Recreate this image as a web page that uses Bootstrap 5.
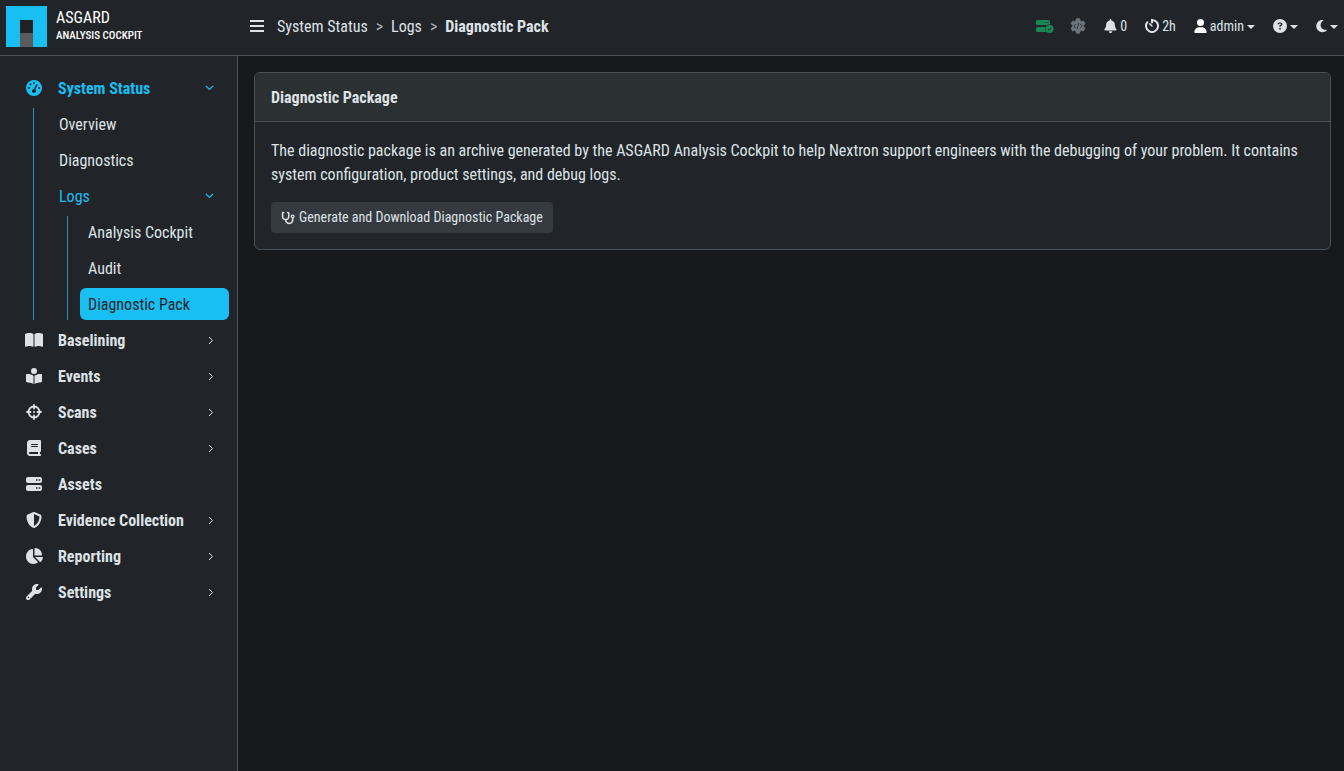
<!DOCTYPE html>
<html lang="en" data-bs-theme="dark">
<head>
<meta charset="utf-8">
<meta name="viewport" content="width=device-width, initial-scale=1">
<title>Diagnostic Pack - ASGARD Analysis Cockpit</title>
<link href="https://cdn.jsdelivr.net/npm/bootstrap@5.3.0/dist/css/bootstrap.min.css" rel="stylesheet">
<style>
  :root { --accent: #18bff2; --surface: #212529; --line: #495057; --ink: #dee2e6; }
  body { font-family: "Roboto Condensed", Roboto, sans-serif; background: #18191d; color: var(--ink); }
  a { color: inherit; text-decoration: none; }
  svg { fill: currentColor; flex: none; display: block; }

  .topbar { background: var(--surface); border-bottom: 1px solid var(--line); min-height: 56px; padding: 0 6px 2px 6px; }
  .brand { width: 240px; color: #fff; }
  .brand-text { padding-left: 9px; }
  .brand-name { font-size: 16px; line-height: 18px; }
  .brand-sub { font-size: 11px; line-height: 18px; font-weight: 500; }
  .crumbs { --bs-breadcrumb-divider: ">"; --bs-breadcrumb-divider-color: #adb5bd; --bs-breadcrumb-item-active-color: var(--ink); margin-left: 9px; }
  .crumbs .breadcrumb-item::before { font-weight: 400; }
  .tool { background: none; border: 0; padding: 0; color: var(--ink); display: flex; align-items: center; gap: 3px; font-size: 14px; }
  .tool svg, .side-link svg { margin-bottom: 2px; }
  .tool.dropdown-toggle::after { margin-left: 0; }
  .tools { gap: 18px; }
  .tools-state { gap: 16px; }
  .tool-ok { color: #198754; }
  .tool-idle { color: #6c757d; }

  .side { width: 238px; background: var(--surface); border-right: 1px solid var(--line); padding: 16px 8px; }
  .side-link { display: flex; align-items: center; height: 32px; margin-bottom: 4px; border-radius: 6px; padding: 2px 15px 0 8px; }
  .side-top { font-weight: 700; padding-left: 16px; }
  .side-top .ico { width: 20px; margin-right: 14px; display: flex; justify-content: center; }
  .chev { margin-left: auto; fill: none; stroke: currentColor; }
  .side-group { margin: 0 0 4px 25px; padding-left: 17px; border-left: 1px solid #2098bb; }
  .side-group .side-group { margin: 0 0 0 16px; padding-left: 12px; }
  .side-group > .side-link:last-child { margin-bottom: 0; }
  .is-open { color: var(--accent); }
  .is-current { background: var(--accent); color: #212529; }

  .content { padding: 16px 13px 16px 16px; }
  .pack-card { --bs-card-bg: #212529; --bs-card-cap-bg: #2b3033; --bs-card-border-color: #495057; }
  .pack-card .card-header { line-height: 24px; padding-top: 13px; padding-bottom: 11px; }
  .pack-card .card-body { padding-top: 17px; }
  .pack-card p { margin-bottom: 15px; }
  .btn-pack { --bs-btn-bg: #343a40; --bs-btn-color: var(--ink); --bs-btn-hover-bg: #424649; --bs-btn-hover-color: #fff; --bs-btn-padding-x: 9px; }
</style>
</head>
<body class="min-vh-100 d-flex flex-column">
<header class="topbar d-flex align-items-center">
  <a href="#" class="brand d-flex align-items-center">
    <svg width="41" height="41" viewBox="0 0 41 41"><path fill="#18bff2" d="M0 0h41v41H0z"/><path fill="#212121" d="M14 14h13v13H14z"/><path fill="#5b5b5b" d="M14 27h13v14H14z"/></svg>
    <span class="brand-text d-flex flex-column"><span class="brand-name">ASGARD</span><span class="brand-sub">ANALYSIS COCKPIT</span></span>
  </a>
  <button class="tool p-1" type="button" aria-label="Toggle menu">
    <svg width="14" height="12" viewBox="0 0 14 12"><path d="M0 0h14v2H0zM0 5h14v2H0zM0 10h14v2H0z"/></svg>
  </button>
  <nav aria-label="breadcrumb">
    <ol class="breadcrumb crumbs mb-0">
      <li class="breadcrumb-item"><a href="#">System Status</a></li>
      <li class="breadcrumb-item"><a href="#">Logs</a></li>
      <li class="breadcrumb-item active fw-bold" aria-current="page">Diagnostic Pack</li>
    </ol>
  </nav>
  <div class="tools ms-auto d-flex align-items-center">
    <div class="tools-state d-flex align-items-center">
      <button class="tool tool-ok" type="button" aria-label="Server state">
        <svg width="18" height="14" viewBox="0 0 18 14">
          <rect y="1" width="14" height="5" rx="1.500"/><rect y="8" width="14" height="5" rx="1.500"/>
          <circle cx="13.500" cy="10" r="4.500" fill="#212529"/><circle cx="13.500" cy="10" r="4"/>
          <path d="M11.800 10l1.200 1.300 2.200-2.500" fill="none" stroke="#212529"/>
          <circle cx="9.500" cy="3.500" r=".6" fill="#212529"/><circle cx="11.800" cy="3.500" r=".6" fill="#212529"/>
        </svg>
      </button>
      <button class="tool tool-idle" type="button" aria-label="Services">
        <svg width="16" height="16" viewBox="0 0 16 16">
          <path stroke="currentColor" stroke-linejoin="round" d="M6.500.8h3l.5 2.100 1.400.8 2-.6 1.500 2.600-1.500 1.500v1.600l1.500 1.500-1.500 2.600-2-.6-1.400.8-.5 2.100h-3L6 13.100l-1.400-.8-2 .6-1.500-2.600 1.500-1.500V7.200L1.100 5.700l1.500-2.600 2 .6L6 2.900z"/>
          <path d="M5.600 5.900L3.900 8l1.700 2.100M10.400 5.900L12.100 8l-1.700 2.100M8.800 5L7.200 11" fill="none" stroke="#212529" stroke-width=".8"/>
        </svg>
      </button>
    </div>
    <button class="tool" type="button" aria-label="Notifications: 0">
      <svg width="13" height="14" viewBox="0 0 448 512"><path d="M224 0c-17.700 0-32 14.300-32 32V51.200C119 66 64 130.600 64 208v18.800c0 47-17.300 92.400-48.500 127.600l-7.400 8.300c-8.400 9.400-10.400 22.900-5.300 34.400S19.400 416 32 416H416c12.600 0 24-7.400 29.200-18.900s3.100-25-5.300-34.400l-7.400-8.300C401.300 319.200 384 273.900 384 226.800V208c0-77.400-55-142-128-156.800V32c0-17.700-14.300-32-32-32zm45.300 493.300c12-12 18.700-28.300 18.700-45.300H160c0 17 6.700 33.300 18.700 45.300s28.300 18.700 45.300 18.700 33.300-6.700 45.300-18.700z"/></svg>
      <span>0</span>
    </button>
    <button class="tool" type="button">
      <svg width="14" height="14" viewBox="0 0 14 14"><path d="M7 3.500V1a6 6 0 1 1-4.600 2.200" fill="none" stroke="currentColor" stroke-width="2" stroke-linecap="round"/><path d="M4.700 4.700L7 7" stroke="currentColor" stroke-width="1.500" stroke-linecap="round"/></svg>
      <span>2h</span>
    </button>
    <button class="tool dropdown-toggle" type="button" data-bs-toggle="dropdown" aria-expanded="false">
      <svg width="13" height="14" viewBox="0 0 448 512"><path fill="#fff" d="M224 256A128 128 0 1 0 224 0a128 128 0 1 0 0 256zm-45.700 48C79.800 304 0 383.800 0 482.300C0 498.700 13.300 512 29.700 512H418.300c16.400 0 29.700-13.300 29.700-29.700C448 383.800 368.200 304 269.700 304H178.300z"/></svg>
      <span>admin</span>
    </button>
    <button class="tool dropdown-toggle" type="button" data-bs-toggle="dropdown" aria-expanded="false" aria-label="Help">
      <svg width="14" height="14" viewBox="0 0 512 512"><path d="M256 512A256 256 0 1 0 256 0a256 256 0 1 0 0 512zM169.800 165.300c7.900-22.300 29.100-37.300 52.800-37.300h58.300c34.900 0 63.100 28.300 63.100 63.100c0 22.600-12.100 43.500-31.700 54.800L280 264.400c-.2 13-10.900 23.600-24 23.600c-13.300 0-24-10.700-24-24V250.500c0-8.600 4.600-16.500 12.100-20.800l44.300-25.400c4.700-2.700 7.600-7.700 7.600-13.100c0-8.400-6.800-15.100-15.100-15.100H222.600c-3.400 0-6.400 2.100-7.500 5.300l-.4 1.200c-4.400 12.500-18.200 19-30.600 14.600s-19-18.200-14.600-30.600l.4-1.200zM224 352a32 32 0 1 1 64 0 32 32 0 1 1 -64 0z"/></svg>
    </button>
    <button class="tool dropdown-toggle" type="button" data-bs-toggle="dropdown" aria-expanded="false" aria-label="Theme">
      <svg width="11" height="14" viewBox="0 0 384 512"><path d="M223.500 32C100 32 0 132.300 0 256S100 480 223.500 480c60.600 0 115.500-24.200 155.800-63.400c5-4.900 6.300-12.500 3.100-18.700s-10.100-9.700-17-8.500c-9.800 1.700-19.800 2.600-30.100 2.600c-96.900 0-175.500-78.800-175.500-176c0-65.800 36-123.100 89.300-153.300c6.100-3.500 9.200-10.500 7.700-17.300s-7.300-11.900-14.300-12.500c-6.300-.5-12.600-.8-19-.8z"/></svg>
    </button>
  </div>
</header>

<div class="d-flex flex-grow-1">
  <nav class="side flex-shrink-0" aria-label="Main">
    <a href="#" class="side-link side-top is-open"><span class="ico"><svg width="16" height="16" viewBox="0 0 512 512"><path d="M0 256a256 256 0 1 1 512 0A256 256 0 1 1 0 256zM288 96a32 32 0 1 0 -64 0 32 32 0 1 0 64 0zM256 416c35.300 0 64-28.700 64-64c0-17.400-6.900-33.100-18.100-44.600L366 161.700c5.300-12.100-.2-26.300-12.300-31.600s-26.300 .2-31.600 12.300L257.900 288c-.6 0-1.300 0-1.900 0c-35.300 0-64 28.700-64 64s28.700 64 64 64zM176 144a32 32 0 1 0 -64 0 32 32 0 1 0 64 0zM96 288a32 32 0 1 0 0-64 32 32 0 1 0 0 64zm352-32a32 32 0 1 0 -64 0 32 32 0 1 0 64 0z"/></svg></span>System Status
      <svg class="chev" width="9" height="6" viewBox="0 0 9 6"><path d="M1 1l3.500 3.500L8 1" stroke-width="1.200"/></svg></a>
    <div class="side-group">
      <a href="#" class="side-link">Overview</a>
      <a href="#" class="side-link">Diagnostics</a>
      <a href="#" class="side-link is-open">Logs<svg class="chev" width="9" height="6" viewBox="0 0 9 6"><path d="M1 1l3.500 3.500L8 1" stroke-width="1.200"/></svg></a>
      <div class="side-group">
        <a href="#" class="side-link">Analysis Cockpit</a>
        <a href="#" class="side-link">Audit</a>
        <a href="#" class="side-link is-current" aria-current="page">Diagnostic Pack</a>
      </div>
    </div>
    <a href="#" class="side-link side-top"><span class="ico"><svg width="18" height="16" viewBox="0 0 576 512"><path d="M249.600 471.500c10.800 3.800 22.400-4.100 22.400-15.500V78.600c0-4.200-1.600-8.400-5-11C247.400 52 202.400 32 144 32C93.500 32 46.300 45.300 18.100 56.100C6.800 60.500 0 71.700 0 83.800V454.100c0 11.900 12.800 20.200 24.100 16.500C55.600 460.100 105.500 448 144 448c33.900 0 79 14 105.600 23.500zm76.800 0C353 462 398.100 448 432 448c38.500 0 88.400 12.100 119.900 22.600c11.300 3.800 24.100-4.600 24.100-16.500V83.800c0-12.100-6.800-23.300-18.100-27.600C529.700 45.300 482.500 32 432 32c-58.400 0-103.400 20-123 35.600c-3.300 2.600-5 6.800-5 11V456c0 11.400 11.700 19.300 22.400 15.500z"/></svg></span>Baselining
      <svg class="chev" width="6" height="9" viewBox="0 0 6 9"><path d="M1 1l3.500 3.500L1 8"/></svg></a>
    <a href="#" class="side-link side-top"><span class="ico"><svg width="16" height="16" viewBox="0 0 512 512"><path d="M160 96a96 96 0 1 1 192 0A96 96 0 1 1 160 96zm80 152V512l-48.400-24.200c-20.900-10.400-43.500-17-66.800-19.300l-96-9.600C12.500 457.200 0 443.500 0 427V224c0-17.700 14.300-32 32-32H62.300c63.600 0 125.600 19.600 177.700 56zm32 264V248c52.100-36.400 114.100-56 177.700-56H480c17.700 0 32 14.300 32 32V427c0 16.400-12.500 30.200-28.800 31.800l-96 9.600c-23.200 2.300-45.900 8.900-66.800 19.300L272 512z"/></svg></span>Events
      <svg class="chev" width="6" height="9" viewBox="0 0 6 9"><path d="M1 1l3.500 3.500L1 8"/></svg></a>
    <a href="#" class="side-link side-top"><span class="ico"><svg width="16" height="16" viewBox="0 0 16 16"><circle cx="8" cy="8" r="5.500" fill="none" stroke="currentColor" stroke-width="1.800"/><path d="M8 1v3.500M8 11.500V15M1 8h3.500M11.500 8H15" stroke="currentColor" stroke-width="1.800" stroke-linecap="round"/><circle cx="8" cy="8" r="1"/></svg></span>Scans
      <svg class="chev" width="6" height="9" viewBox="0 0 6 9"><path d="M1 1l3.500 3.500L1 8"/></svg></a>
    <a href="#" class="side-link side-top"><span class="ico"><svg width="14" height="16" viewBox="0 0 448 512"><path d="M96 0C43 0 0 43 0 96V416c0 53 43 96 96 96H384h32c17.700 0 32-14.300 32-32s-14.300-32-32-32V384c17.700 0 32-14.300 32-32V32c0-17.700-14.300-32-32-32H384 96zm0 384H352v64H96c-17.700 0-32-14.300-32-32s14.300-32 32-32zm32-240c0-8.800 7.200-16 16-16H336c8.800 0 16 7.200 16 16s-7.200 16-16 16H144c-8.800 0-16-7.200-16-16zm16 48H336c8.800 0 16 7.200 16 16s-7.200 16-16 16H144c-8.800 0-16-7.200-16-16s7.200-16 16-16z"/></svg></span>Cases
      <svg class="chev" width="6" height="9" viewBox="0 0 6 9"><path d="M1 1l3.500 3.500L1 8"/></svg></a>
    <a href="#" class="side-link side-top"><span class="ico"><svg width="16" height="16" viewBox="0 0 16 16"><rect y="1" width="16" height="6" rx="2"/><rect y="9" width="16" height="6" rx="2"/><path fill="#212529" d="M10 3.200h1.500v1.600H10zM12.700 3.200h1.500v1.600h-1.500zM10 11.200h1.500v1.600H10zM12.700 11.200h1.500v1.600h-1.500z"/></svg></span>Assets</a>
    <a href="#" class="side-link side-top"><span class="ico"><svg width="16" height="16" viewBox="0 0 512 512"><path d="M256 0c4.600 0 9.200 1 13.400 2.900L457.700 82.800c22 9.300 38.400 31 38.300 57.200c-.5 99.200-41.300 280.700-213.600 363.200c-16.700 8-36.100 8-52.800 0C57.300 420.700 16.500 239.200 16 140c-.1-26.200 16.300-47.900 38.300-57.200L242.700 2.900C246.800 1 251.400 0 256 0zm0 66.800V444.800C394 378 431.100 230.100 432 141.400L256 66.800z"/></svg></span>Evidence Collection
      <svg class="chev" width="6" height="9" viewBox="0 0 6 9"><path d="M1 1l3.500 3.500L1 8"/></svg></a>
    <a href="#" class="side-link side-top"><span class="ico"><svg width="18" height="16" viewBox="0 0 576 512"><path d="M304 240V16.600c0-9 7-16.600 16-16.600C443.700 0 544 100.300 544 224c0 9-7.600 16-16.600 16H304zM32 272C32 150.700 122.100 50.300 239 34.300c9.200-1.300 17 6.100 17 15.400V288L412.500 444.500c6.700 6.700 6.200 17.700-1.500 23.100C371.800 495.600 323.800 512 272 512C139.500 512 32 404.600 32 272zm526.400 16c9.300 0 16.600 7.800 15.400 17c-7.700 55.900-34.600 105.600-73.900 142.300c-6 5.600-15.400 5.200-21.200-.7L320 288H558.400z"/></svg></span>Reporting
      <svg class="chev" width="6" height="9" viewBox="0 0 6 9"><path d="M1 1l3.500 3.500L1 8"/></svg></a>
    <a href="#" class="side-link side-top"><span class="ico"><svg width="16" height="16" viewBox="0 0 512 512"><path d="M352 320c88.400 0 160-71.600 160-160c0-15.300-2.200-30.100-6.200-44.200c-3.100-10.800-16.400-13.200-24.300-5.300l-76.800 76.800c-3 3-7.100 4.700-11.300 4.700H336c-8.800 0-16-7.200-16-16V118.600c0-4.200 1.700-8.300 4.700-11.300l76.800-76.800c7.900-7.900 5.400-21.200-5.300-24.300C382.100 2.200 367.300 0 352 0C263.600 0 192 71.600 192 160c0 19.100 3.400 37.500 9.500 54.500L19.900 396.100C7.200 408.800 0 426.100 0 444.100C0 481.600 30.400 512 67.900 512c18 0 35.300-7.200 48-19.900L297.500 310.500c17 6.200 35.400 9.500 54.500 9.500zM80 408a24 24 0 1 1 0 48 24 24 0 1 1 0-48z"/></svg></span>Settings
      <svg class="chev" width="6" height="9" viewBox="0 0 6 9"><path d="M1 1l3.500 3.500L1 8"/></svg></a>
  </nav>

  <main class="content flex-grow-1">
    <section class="card pack-card">
      <h1 class="card-header fs-6 fw-bold mb-0">Diagnostic Package</h1>
      <div class="card-body">
        <p>The diagnostic package is an archive generated by the ASGARD Analysis Cockpit to help Nextron support engineers with the debugging of your problem. It contains system configuration, product settings, and debug logs.</p>
        <button type="button" class="btn btn-sm btn-pack d-inline-flex align-items-center gap-1">
          <svg width="14" height="14" viewBox="0 0 576 512"><path d="M142.400 21.900c5.600 16.800-3.500 34.900-20.200 40.500L96 71.100V192c0 53 43 96 96 96s96-43 96-96V71.100l-26.100-8.700c-16.800-5.600-25.800-23.700-20.200-40.500s23.700-25.800 40.500-20.200l26.100 8.700C334.400 19.100 352 43.500 352 71.100V192c0 77.200-54.600 141.600-127.300 156.700C231 404.600 278.400 448 336 448c61.900 0 112-50.100 112-112V265.300c-28.300-12.300-48-40.500-48-73.300c0-44.200 35.800-80 80-80s80 35.800 80 80c0 32.800-19.700 61-48 73.300V336c0 97.200-78.800 176-176 176c-92.900 0-168.900-71.900-175.500-163.100C87.200 334.200 32 269.600 32 192V71.100c0-27.500 17.600-52 43.800-60.700l26.100-8.700c16.800-5.600 34.900 3.500 40.500 20.200zM480 224a32 32 0 1 0 0-64 32 32 0 1 0 0 64z"/></svg>
          Generate and Download Diagnostic Package
        </button>
      </div>
    </section>
  </main>
</div>
<script src="https://cdn.jsdelivr.net/npm/bootstrap@5.3.0/dist/js/bootstrap.bundle.min.js"></script>
</body>
</html>
